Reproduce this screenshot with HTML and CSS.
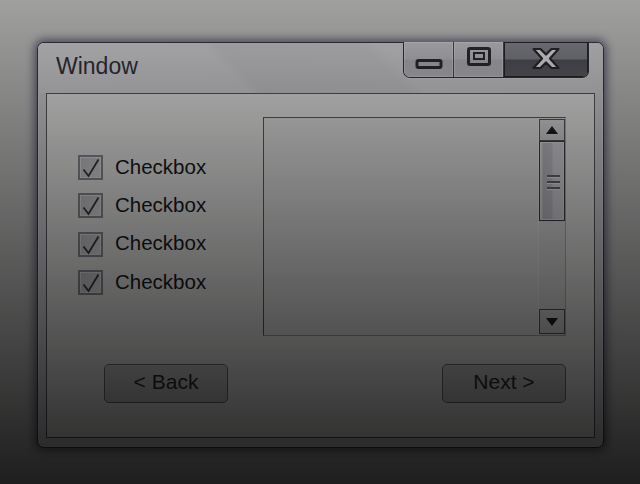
FILE: index.html
```html
<!DOCTYPE html>
<html>
<head>
<meta charset="utf-8">
<title>Window</title>
<link rel="stylesheet" href="styles.css">
</head>
<body>
<div class="desktop">
  <div class="window">
    <div class="titlebar">
      <div class="title">Window</div>
      <div class="caption-buttons">
        <div class="cb cb-min">
          <svg width="28" height="10" viewBox="0 0 28 10"><rect x="2" y="1.5" width="24" height="7" rx="1.5" fill="none" stroke="#2e2e34" stroke-width="3"/></svg>
        </div>
        <div class="cb cb-max">
          <svg width="24" height="19" viewBox="0 0 24 19"><rect x="1.5" y="1.5" width="21" height="16" rx="1.5" fill="none" stroke="#2e2e34" stroke-width="3"/><rect x="7" y="6" width="10" height="6" fill="none" stroke="#2e2e34" stroke-width="2"/></svg>
        </div>
        <div class="cb cb-close">
          <svg width="32" height="25" viewBox="0 0 32 25">
            <path d="M3.5 3 L10.5 3 L16 8.5 L21.5 3 L28.5 3 L20 12.5 L28.5 22 L21.5 22 L16 16.5 L10.5 22 L3.5 22 L12 12.5 Z" fill="#eeeef2" stroke="#2a2a30" stroke-width="2.2" stroke-linejoin="round"/>
          </svg>
        </div>
      </div>
    </div>
    <div class="panel">
      <div class="upper">
        <div class="checks">
          <label class="check"><span class="box"><svg width="21" height="21" viewBox="0 0 21 21"><path d="M3.5 12.5 L8.5 19 L18.5 2.5" fill="none" stroke="#3a3a40" stroke-width="1.8"/></svg></span><span class="check-label">Checkbox</span></label>
          <label class="check"><span class="box"><svg width="21" height="21" viewBox="0 0 21 21"><path d="M3.5 12.5 L8.5 19 L18.5 2.5" fill="none" stroke="#3a3a40" stroke-width="1.8"/></svg></span><span class="check-label">Checkbox</span></label>
          <label class="check"><span class="box"><svg width="21" height="21" viewBox="0 0 21 21"><path d="M3.5 12.5 L8.5 19 L18.5 2.5" fill="none" stroke="#3a3a40" stroke-width="1.8"/></svg></span><span class="check-label">Checkbox</span></label>
          <label class="check"><span class="box"><svg width="21" height="21" viewBox="0 0 21 21"><path d="M3.5 12.5 L8.5 19 L18.5 2.5" fill="none" stroke="#3a3a40" stroke-width="1.8"/></svg></span><span class="check-label">Checkbox</span></label>
        </div>
        <div class="listbox">
          <div class="list-area"></div>
          <div class="scrollbar">
            <div class="sb-btn sb-up">
              <svg width="12" height="8" viewBox="0 0 12 8"><polygon points="6,0 12,8 0,8" fill="#1e1e22"/></svg>
            </div>
            <div class="thumb">
              <span class="grip"></span>
              <span class="grip"></span>
              <span class="grip"></span>
            </div>
            <div class="track"></div>
            <div class="sb-btn sb-down">
              <svg width="12" height="8" viewBox="0 0 12 8"><polygon points="0,0 12,0 6,8" fill="#1e1e22"/></svg>
            </div>
          </div>
        </div>
      </div>
      <div class="buttons">
        <button class="btn">&lt; Back</button>
        <button class="btn">Next &gt;</button>
      </div>
    </div>
  </div>
</div>
<div class="shade"></div>
</body>
</html>
```

FILE: styles.css
```css
html, body {
  margin: 0;
  padding: 0;
}

body {
  width: 640px;
  height: 484px;
  overflow: hidden;
  background: #c8c8c7;
  font-family: "Liberation Sans", Arial, sans-serif;
}

.desktop {
  padding: 42px 0 0 37px;
}

.window {
  box-sizing: border-box;
  width: 567px;
  height: 406px;
  border: 1px solid #3a3846;
  border-radius: 7px;
  background: #d6d6da;
  box-shadow: 0 0 9px 3px rgba(55, 50, 85, 0.65), inset 0 0 0 1px rgba(255, 255, 255, 0.4);
  padding: 0 8px 9px 8px;
  display: flex;
  flex-direction: column;
}

.titlebar {
  height: 50px;
  display: flex;
  align-items: flex-start;
  margin: 0 -8px;
  padding: 0 14px 0 8px;
  background: linear-gradient(45deg, #dcdcdf 0, #dadadd 150px, #d3d3d7 160px, #d4d4d8 262px, #dadade 276px, #d8d8dc 100%);
  border-radius: 6px 6px 0 0;
}

.title {
  padding: 10px 0 0 10px;
  font-size: 23px;
  line-height: 26px;
  color: #34343c;
}

.caption-buttons {
  margin-left: auto;
  margin-top: -1px;
  display: flex;
  height: 36px;
  box-sizing: border-box;
  border: 1px solid #34343c;
  border-top: none;
  border-radius: 0 0 7px 7px;
  overflow: hidden;
  box-shadow: 0 1px 0 rgba(255, 255, 255, 0.35);
}

.cb {
  display: flex;
  justify-content: center;
  align-items: flex-start;
  box-sizing: border-box;
}

.cb-min, .cb-max {
  width: 50px;
  background: linear-gradient(to bottom, #cfcfd5 0%, #c6c6cc 48%, #b9b9c0 52%, #c2c2c8 100%);
  border-right: 1px solid #4a4a52;
  box-shadow: inset 0 0 0 1px rgba(255, 255, 255, 0.35);
}

.cb-min {
  padding-top: 17px;
}

.cb-max {
  padding-top: 5px;
}

.cb-close {
  width: 84px;
  padding-top: 4px;
  background: linear-gradient(to bottom, #8e8e98 0%, #84848e 48%, #56565e 52%, #62626a 100%);
  box-shadow: inset 0 0 0 1px #2a2a30;
}

.panel {
  flex: 1;
  border: 1px solid #5a5a62;
  background: #efefee;
  padding: 23px 28px 0 31px;
  display: flex;
  flex-direction: column;
}

.upper {
  display: flex;
  align-items: flex-start;
}

.checks {
  width: 186px;
  display: flex;
  flex-direction: column;
  gap: 13.4px;
  margin-top: 38px;
}

.check {
  display: flex;
  align-items: center;
  gap: 12px;
}

.box {
  box-sizing: border-box;
  width: 25px;
  height: 25px;
  border: 2px solid #8e8e98;
  background: linear-gradient(135deg, #c8c8cc 0%, #d8d8dc 60%, #e4e4e6 100%);
  box-shadow: inset 0 0 0 1px #ececee;
  display: flex;
  align-items: center;
  justify-content: center;
}

.check-label {
  font-size: 20.5px;
  color: #1a1a1e;
  line-height: 24px;
  margin-top: -2px;
}

.listbox {
  box-sizing: border-box;
  width: 304px;
  height: 219px;
  border: 1px solid #5c5c66;
  border-right-color: #b4b4b8;
  border-bottom-color: #a8a8ac;
  background: #eaeaea;
  display: flex;
}

.list-area {
  flex: 1;
  border-right: 1px solid #f6f6f6;
}

.scrollbar {
  width: 26px;
  display: flex;
  flex-direction: column;
  padding: 1px 0;
  background: #e6e6e8;
}

.sb-btn {
  box-sizing: border-box;
  border: 1px solid #5a5a62;
  background: linear-gradient(to bottom, #e2e2e6, #d6d6da);
  display: flex;
  align-items: center;
  justify-content: center;
}

.sb-up {
  height: 22px;
}

.sb-down {
  height: 25px;
}

.thumb {
  box-sizing: border-box;
  height: 80px;
  border: 1px solid #3e3e46;
  background: linear-gradient(to right, #e0e0e4 0, #e0e0e4 2px, #c2c2ca 3px, #c8c8d0 12px, #dcdce0 13px, #dedee2 100%);
  box-shadow: inset 0 0 0 1px #ececee;
  display: flex;
  flex-direction: column;
  align-items: center;
  gap: 3px;
  padding-top: 33px;
}

.grip {
  width: 13px;
  height: 2px;
  background: #6a6a72;
  border-bottom: 1px solid #f4f4f6;
  margin-left: 2px;
}

.track {
  flex: 1;
}

.buttons {
  display: flex;
  justify-content: space-between;
  margin-top: 28px;
  padding-left: 26px;
}

.btn {
  box-sizing: border-box;
  width: 124px;
  height: 39px;
  border: 1px solid #6e6e6e;
  border-radius: 5px;
  background: linear-gradient(to bottom, #d2d2d2, #c8c8c8);
  box-shadow: inset 0 0 0 1px rgba(255, 255, 255, 0.12);
  font-family: "Liberation Sans", Arial, sans-serif;
  font-size: 21px;
  color: #2e2e2e;
  padding: 0 0 3px 0;
}

.shade {
  position: fixed;
  left: 0;
  top: 0;
  width: 640px;
  height: 484px;
  background: linear-gradient(to bottom, rgba(0, 0, 0, 0.2) 0%, rgba(0, 0, 0, 0.85) 100%);
  pointer-events: none;
}
```
